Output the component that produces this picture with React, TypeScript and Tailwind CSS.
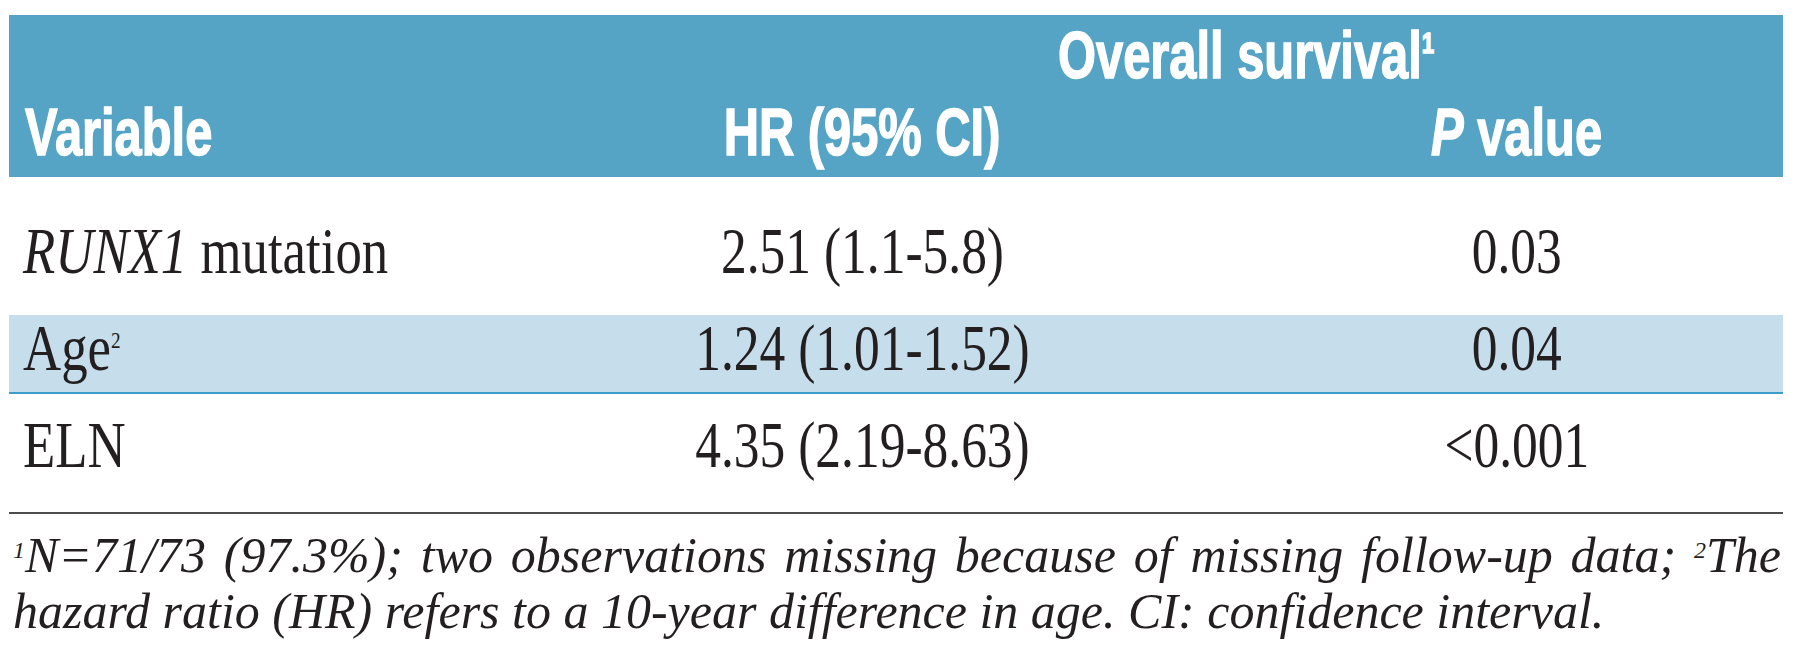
import React from 'react';

type Row = {
  label: React.ReactNode;
  hr: string;
  p: string;
};

const rows: Row[] = [
  {
    label: (
      <>
        <i>RUNX1</i> mutation
      </>
    ),
    hr: '2.51 (1.1-5.8)',
    p: '0.03',
  },
  {
    label: (
      <>
        Age<sup className="text-[24px] -top-[22px]">2</sup>
      </>
    ),
    hr: '1.24 (1.01-1.52)',
    p: '0.04',
  },
  { label: 'ELN', hr: '4.35 (2.19-8.63)', p: '<0.001' },
];

// row box sizes, measured off the printed table
const rowCls = [
  'h-[138px] pt-[41px]',
  'h-[79px] pt-0 bg-[#c6deeb] border-b-2 border-[#3c9dc7]',
  'h-[118px] pt-[18px]',
];

const cols = 'grid grid-cols-[464px_778px_532px]';
const head =
  "font-['Liberation_Sans',Arial,sans-serif] font-bold text-white text-[66px] leading-none [-webkit-text-stroke:1.5px_white]";
const body = "font-['Liberation_Serif','Times_New_Roman',serif] text-[#231f20] text-[66px] leading-none";
const squeezeL = 'inline-block origin-left scale-x-[0.74]';
const squeezeC = 'inline-block origin-center scale-x-[0.74]';
const narrowL = 'inline-block origin-left scale-x-[0.8]';
const narrowC = 'inline-block origin-center scale-x-[0.78]';

export default function App() {
  return (
    <div className="w-[1800px] h-[666px] bg-white overflow-hidden">
      <div className="ml-[9px] pt-[15px] w-[1774px]">
        {/* Header band */}
        <div className={`bg-[#56a4c5] pt-[7px] pb-[12px] ${head}`}>
          <div className={cols}>
            <div />
            <div className="col-span-2 pl-[585px] whitespace-nowrap">
              <span className={squeezeL}>
                Overall survival
                <sup className="text-[30px] -top-[25px]">1</sup>
              </span>
            </div>
          </div>
          <div className={`${cols} mt-[11px]`}>
            <div className="pl-4 whitespace-nowrap">
              <span className={squeezeL}>Variable</span>
            </div>
            <div className="text-center whitespace-nowrap">
              <span className={squeezeC}>HR (95% CI)</span>
            </div>
            <div className="text-center whitespace-nowrap">
              <span className={squeezeC}>
                <i>P</i> value
              </span>
            </div>
          </div>
        </div>

        {/* Body rows */}
        <div className={body}>
          {rows.map((r, i) => (
            <div key={i} className={`${cols} ${rowCls[i]}`}>
              <div className="pl-[14px] whitespace-nowrap">
                <span className={narrowL}>{r.label}</span>
              </div>
              <div className="text-center whitespace-nowrap">
                <span className={narrowC}>{r.hr}</span>
              </div>
              <div className="text-center whitespace-nowrap">
                <span className={narrowC}>{r.p}</span>
              </div>
            </div>
          ))}
        </div>

        {/* Footnote */}
        <div className="border-t-2 border-[#4d4d4d] pt-[13px] pl-[4px] pr-[2px] font-['Liberation_Serif','Times_New_Roman',serif] italic text-[50px] leading-[56px] text-[#231f20]">
          <div className="text-justify [text-align-last:justify] whitespace-nowrap">
            <sup className="text-[24px] -top-[14px]">1</sup>N=71/73 (97.3%); two observations missing because of missing follow-up data;{' '}
            <sup className="text-[24px] -top-[14px]">2</sup>The
          </div>
          <div className="whitespace-nowrap">
            hazard ratio (HR) refers to a 10-year difference in age. CI: confidence interval.
          </div>
        </div>
      </div>
    </div>
  );
}
